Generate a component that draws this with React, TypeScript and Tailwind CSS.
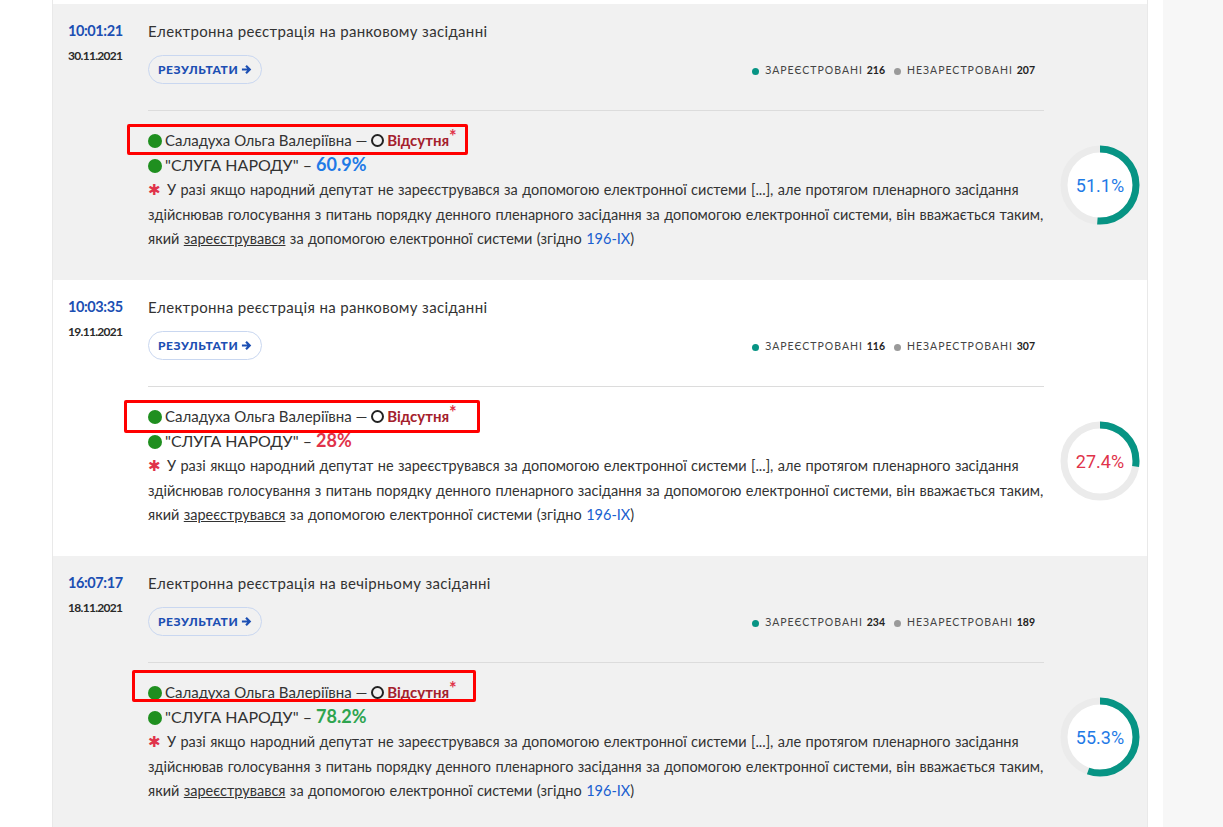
import React from "react";

type Row = {
	time: string;
	date: string;
	title: string;
	reg: number;
	unreg: number;
	party: string;
	partyColor: string;
	pct: number;
	pctColor: string;
	bg: string;
	box: string;
};

const rows: Row[] = [
	{
		time: "10:01:21",
		date: "30.11.2021",
		title: "Електронна реєстрація на ранковому засіданні",
		reg: 216,
		unreg: 207,
		party: "60.9%",
		partyColor: "text-[#1f7ae6]",
		pct: 51.1,
		pctColor: "text-[#1f7ae6]",
		bg: "bg-[#f1f1f1]",
		box: "left-[-21px] top-[-4px] w-[341px] h-[31px]",
	},
	{
		time: "10:03:35",
		date: "19.11.2021",
		title: "Електронна реєстрація на ранковому засіданні",
		reg: 116,
		unreg: 307,
		party: "28%",
		partyColor: "text-[#e0334a]",
		pct: 27.4,
		pctColor: "text-[#e0334a]",
		bg: "bg-white",
		box: "left-[-24px] top-[-4px] w-[356px] h-[33px]",
	},
	{
		time: "16:07:17",
		date: "18.11.2021",
		title: "Електронна реєстрація на вечірньому засіданні",
		reg: 234,
		unreg: 189,
		party: "78.2%",
		partyColor: "text-[#2ea44f]",
		pct: 55.3,
		pctColor: "text-[#1f7ae6]",
		bg: "bg-[#f1f1f1]",
		box: "left-[-16px] top-[-10px] w-[344px] h-[32px]",
	},
];

const Ring = ({ pct, color }: { pct: number; color: string }) => {
	const r = 36;
	const c = 2 * Math.PI * r;
	return (
		<div className="relative w-[80px] h-[80px]">
			<svg width="80" height="80" viewBox="0 0 80 80">
				<circle cx="40" cy="40" r={r} fill="#ffffff" stroke="#ebebeb" strokeWidth="7" />
				<circle
					cx="40"
					cy="40"
					r={r}
					fill="none"
					stroke="#079484"
					strokeWidth="7"
					strokeDasharray={`${(c * pct) / 100} ${c}`}
					transform="rotate(-90 40 40)"
				/>
			</svg>
			<div className={`absolute inset-0 flex items-center justify-center text-[18px] font-[Roboto,sans-serif] ${color}`}>
				{pct}%
			</div>
		</div>
	);
};

const Dot = () => <span className="inline-block w-[14px] h-[14px] rounded-full bg-[#1f8f1f] mr-[3px] align-[-2px]" />;

const Entry = ({ row }: { row: Row }) => (
	<div className={`flex h-[276px] pl-[15px] pt-[16px] ${row.bg}`}>
		<div className="w-[80px]">
			<div className="text-[14.5px] leading-[22px] font-bold tracking-[-0.4px] text-[#1c4fb3]">{row.time}</div>
			<div className="mt-[6px] text-[12px] leading-[16px] font-bold text-[#2a2a2a] tracking-[-0.7px]">{row.date}</div>
		</div>
		<div className="flex flex-col">
			<div className="w-[896px]">
				<div className="text-[15px] leading-[22px] tracking-[0.35px] text-[#333]">{row.title}</div>
				<div className="mt-[13px] flex items-center justify-between">
					<button className="h-[29px] px-[9px] rounded-full border border-[#c9d7f0] text-[12px] font-black tracking-[0.6px] text-[#1c4fb3] flex items-center gap-[3px]">
						РЕЗУЛЬТАТИ
						<svg width="11" height="11" viewBox="0 0 12 12">
							<path d="M1 6h8M5.5 2L9.5 6 5.5 10" stroke="#1c4fb3" strokeWidth="2.4" fill="none" />
						</svg>
					</button>
					<div className="mr-[9px] mt-[3px] flex items-center text-[10.5px] tracking-[1px] text-[#444]">
						<span className="w-[7px] h-[7px] rounded-full bg-[#079484] mr-[6px]" />
						ЗАРЕЄСТРОВАНІ&nbsp;<b className="text-[#222] tracking-[0px]">{row.reg}</b>
						<span className="w-[7px] h-[7px] rounded-full bg-[#9a9a9a] ml-[9px] mr-[6px]" />
						НЕЗАРЕСТРОВАНІ&nbsp;<b className="text-[#222] tracking-[0px]">{row.unreg}</b>
					</div>
				</div>
				<div className="mt-[26px] border-t border-[#dcdcdc]" />
			</div>
			<div className="flex mt-[17px]">
				<div className="w-[900px] text-[15px] text-[#333]">
					<div className="relative leading-[24px] h-[24px]">
						<div className={`absolute border-[3px] border-[#ff0000] rounded-[2px] ${row.box}`} />
						<Dot />
						Саладуха Ольга Валеріївна —{" "}
						<span className="inline-block w-[13px] h-[13px] rounded-full border-2 border-[#222] align-[-1px] mr-[3px]" />
						<b className="text-[#a4202c]">Відсутня</b>
						<span className="text-[#e0334a] font-bold text-[18px] leading-[0] align-[3px]">*</span>
					</div>
					<div className="leading-[24px] h-[24px] text-[16px]">
						<Dot />
						"СЛУГА НАРОДУ" – <b className={`text-[18px] leading-[24px] ${row.partyColor}`}>{row.party}</b>
					</div>
					<div className="mt-[2px] leading-[24.5px] text-[14.5px] [word-spacing:0.7px]">
						<span className="inline-block leading-[14px] text-[#e0334a] mr-[6px]">✱</span>У разі якщо народний депутат не зареєструвався за допомогою електронної системи [...], але протягом пленарного засідання здійснював голосування з питань порядку денного пленарного засідання за допомогою електронної системи, він вважається таким, який{" "}
						<span className="underline">зареєструвався</span> за допомогою електронної системи (згідно{" "}
						<span className="text-[#1a5fd0]">196-IX</span>)
					</div>
				</div>
				<div className="ml-[12px] mt-[17px]">
					<Ring pct={row.pct} color={row.pctColor} />
				</div>
			</div>
		</div>
	</div>
);

export default function App() {
	return (
		<div className="flex h-[827px] overflow-hidden bg-white font-[Lato,'Noto_Sans',sans-serif]">
			<div className="w-[52px] shrink-0" />
			<div className="w-[1096px] shrink-0 pt-[4px] border-l border-r border-[#e9e9e9]">
				{rows.map((r) => (
					<Entry key={r.time} row={r} />
				))}
			</div>
			<div className="w-[15px] shrink-0" />
			<div className="flex-1 bg-[#f7f7f7]" />
		</div>
	);
}
